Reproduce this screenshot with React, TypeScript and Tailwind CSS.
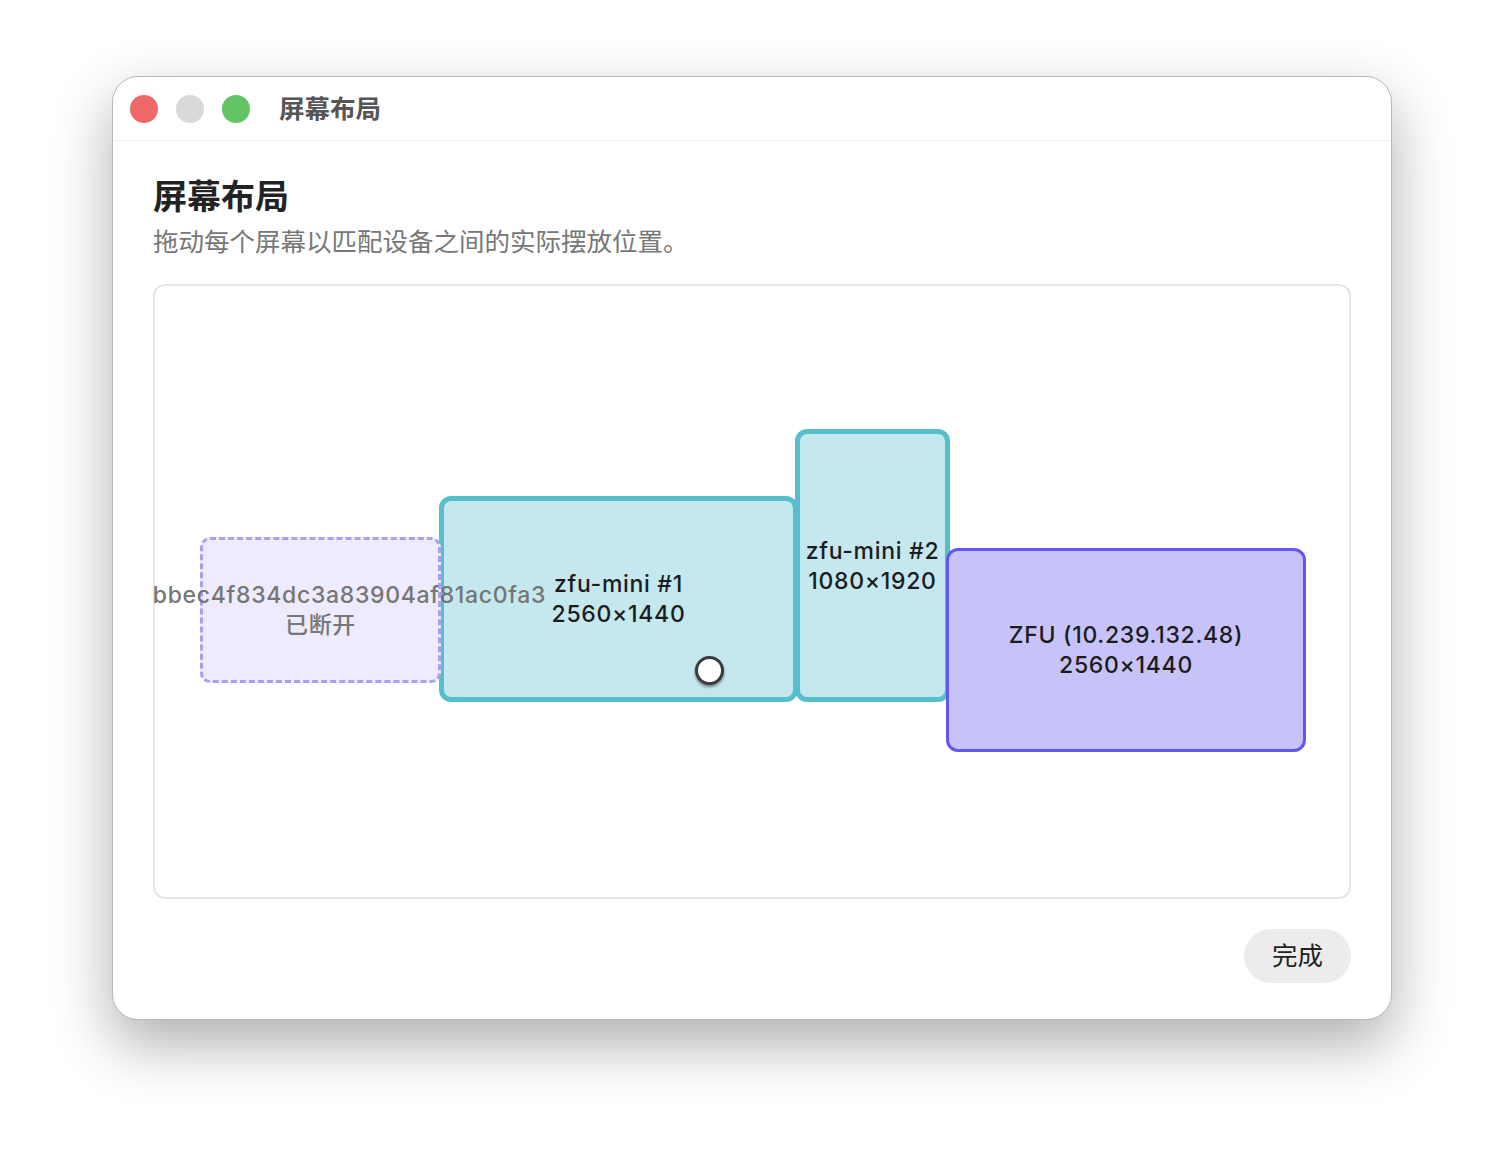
import React from 'react';

type Screen = {
    id: string;
    name: string;
    res: string;
    left: number;
    top: number;
    width: number;
    height: number;
    kind: 'mini' | 'main' | 'off';
    nameClass?: string;
};

// drawn in this order; the disconnected one last so its long label sits on top
const screens: Screen[] = [
    { id: 'm1', name: 'zfu-mini #1', res: '2560×1440', left: 284, top: 210, width: 359, height: 206, kind: 'mini' },
    { id: 'm2', name: 'zfu-mini #2', res: '1080×1920', left: 640, top: 143, width: 155, height: 273, kind: 'mini' },
    { id: 'zfu', name: 'ZFU (10.239.132.48)', res: '2560×1440', left: 791, top: 262, width: 360, height: 204, kind: 'main' },
    // long id label is kept inside the canvas, so it sits to the right of centre
    { id: 'off', name: 'bbec4f834dc3a83904af81ac0fa3', res: '已断开', left: 45, top: 251, width: 241, height: 146, kind: 'off', nameClass: 'translate-x-[29px]' },
];

const kindClass: Record<Screen['kind'], string> = {
    off: 'bg-[#edebfd] border-[3px] border-dashed border-[#a99ff7] rounded-[10px] text-[#767676]',
    mini: 'bg-[#c5e8ee] border-[5px] border-[#56bfcc] rounded-[12px] text-[#1c1c1e]',
    main: 'bg-[#c7c3f8] border-[3px] border-[#6457f0] rounded-[12px] text-[#1c1c1e]',
};

export default function App() {
    return (
        <div className="w-[1504px] h-[1168px] bg-white" style={{ fontFamily: 'Inter, "Noto Sans CJK SC", sans-serif' }}>
            <div className="absolute left-[112px] top-[76px] w-[1280px] h-[944px] bg-white rounded-[26px] border border-[#b9b9b9] shadow-[0_24px_60px_rgba(0,0,0,0.32)] flex flex-col overflow-hidden">
                {/* title bar */}
                <div className="h-[64px] shrink-0 flex items-center border-b border-[#eeeeee] pl-[17px]">
                    <div className="flex gap-[18px]">
                        <span className="w-[28px] h-[28px] rounded-full bg-[#ee6a68]" />
                        <span className="w-[28px] h-[28px] rounded-full bg-[#d9d9d9]" />
                        <span className="w-[28px] h-[28px] rounded-full bg-[#62c463]" />
                    </div>
                    <div className="ml-[29px] text-[25.5px] font-bold text-[#555555] leading-none">屏幕布局</div>
                </div>

                <div className="flex-1 flex flex-col px-[40px] pt-[36px]">
                    <h1 className="text-[34px] font-bold text-[#222222] leading-[40px]">屏幕布局</h1>
                    <p className="mt-[10px] text-[25.5px] text-[#777777] leading-[30px] whitespace-nowrap">拖动每个屏幕以匹配设备之间的实际摆放位置。</p>

                    <div className="mt-[27px] relative h-[615px] rounded-[12px] border-2 border-[#e6e6e6]">
                        {screens.map(s => (
                            <div
                                key={s.id}
                                className={`absolute flex flex-col items-center justify-center text-[23px] font-medium tracking-[0.03em] leading-[30px] whitespace-nowrap ${kindClass[s.kind]}`}
                                style={{ left: s.left, top: s.top, width: s.width, height: s.height }}
                            >
                                <span className={s.nameClass}>{s.name}</span>
                                <span>{s.res}</span>
                            </div>
                        ))}
                        {/* drag handle */}
                        <div className="absolute left-[540px] top-[370px] w-[29px] h-[29px] rounded-full bg-white border-[3px] border-[#3a3a3a] shadow-[0_2px_3px_rgba(0,0,0,0.45)]" />
                    </div>

                    <div className="flex justify-end mt-[30px]">
                        <button className="w-[107px] h-[54px] rounded-full bg-[#ececec] text-[25.5px] text-[#222222]">完成</button>
                    </div>
                </div>
            </div>
        </div>
    );
}
